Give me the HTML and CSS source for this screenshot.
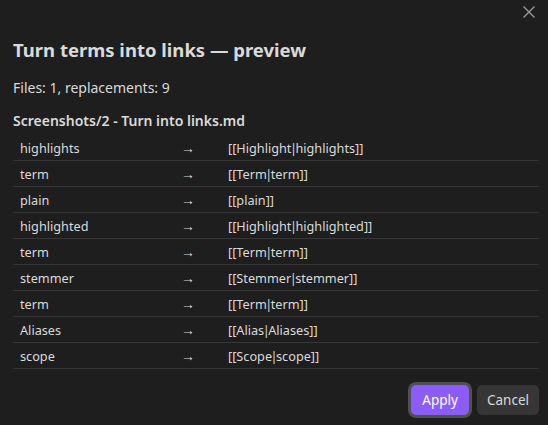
FILE: index.html
```html
<!DOCTYPE html>
<html lang="en">
<head>
    <meta charset="UTF-8">
    <meta name="viewport" content="width=device-width, initial-scale=1.0">
    <title>Turn terms into links — preview</title>
    <link rel="stylesheet" href="styles.css">
</head>
<body>

    <div class="modal">
        <!-- Close button -->
        <button class="modal-close" aria-label="Close">
            <svg width="14" height="14" viewBox="0 0 14 14">
                <path d="M1.5 1.5 L12.5 12.5 M12.5 1.5 L1.5 12.5" stroke="#9a9a9a" stroke-width="1.4" fill="none"/>
            </svg>
        </button>

        <h1 class="modal-title">Turn terms into links — preview</h1>
        <p class="summary">Files: 1, replacements: 9</p>

        <!-- One block per file -->
        <h3 class="file-name">Screenshots/2 - Turn into links.md</h3>
        <div class="changes">
            <div class="change"><span>highlights</span><span class="arrow">→</span><span>[[Highlight<i>|</i>highlights]]</span></div>
            <div class="change"><span>term</span><span class="arrow">→</span><span>[[Term<i>|</i>term]]</span></div>
            <div class="change"><span>plain</span><span class="arrow">→</span><span>[[plain]]</span></div>
            <div class="change"><span>highlighted</span><span class="arrow">→</span><span>[[Highlight<i>|</i>highlighted]]</span></div>
            <div class="change"><span>term</span><span class="arrow">→</span><span>[[Term<i>|</i>term]]</span></div>
            <div class="change"><span>stemmer</span><span class="arrow">→</span><span>[[Stemmer<i>|</i>stemmer]]</span></div>
            <div class="change"><span>term</span><span class="arrow">→</span><span>[[Term<i>|</i>term]]</span></div>
            <div class="change"><span>Aliases</span><span class="arrow">→</span><span>[[Alias<i>|</i>Aliases]]</span></div>
            <div class="change"><span>scope</span><span class="arrow">→</span><span>[[Scope<i>|</i>scope]]</span></div>
        </div>

        <div class="modal-buttons">
            <button class="btn btn-cta">Apply</button>
            <button class="btn">Cancel</button>
        </div>
    </div>

</body>
</html>
```

FILE: styles.css
```css
body {
    margin: 0;
    padding: 0;
    background-color: #1e1e1e;
    color: #dadada;
    font-family: "Noto Sans", "Open Sans", sans-serif;
}

.modal {
    position: relative;
    width: 548px;
    height: 425px;
    box-sizing: border-box;
    padding: 37px 9px 0 13px;
}

.modal-close {
    position: absolute;
    top: 5px;
    right: 12px;
    width: 14px;
    height: 14px;
    padding: 0;
    border: none;
    background: none;
    cursor: pointer;
}

.modal-close svg {
    display: block;
}

.modal-title {
    margin: 0;
    font-size: 18.5px;
    line-height: 26px;
    font-weight: 700;
    color: #dadada;
}

.summary {
    margin: 15px 0 0;
    font-size: 14px;
    line-height: 20px;
}

.file-name {
    margin: 13px 0 0;
    font-size: 14px;
    line-height: 20px;
    font-weight: 600;
}

.changes {
    margin-top: 4px;
}

.change {
    display: grid;
    grid-template-columns: 161px 47px 1fr;
    height: 25px;
    align-items: center;
    border-bottom: 1px solid #363636;
    font-size: 12.7px;
}

.change span {
    padding-left: 7px;
}

/* the pipe in wiki links sits tight against its neighbours */
.change i {
    font-style: normal;
    margin: 0 -1.5px;
}

.change .arrow {
    font-size: 14px;
}

.modal-buttons {
    display: flex;
    justify-content: flex-end;
    gap: 8px;
    margin-top: 16px;
}

.btn {
    height: 30px;
    padding: 0 10px;
    border: none;
    border-radius: 5px;
    background-color: #363636;
    color: #dadada;
    font-family: inherit;
    font-size: 13.5px;
    cursor: pointer;
}

.btn-cta {
    padding: 0 11px;
    background-color: #8b5cf6;
    color: #fff;
    box-shadow: 0 0 0 3px #505050;
}
```
